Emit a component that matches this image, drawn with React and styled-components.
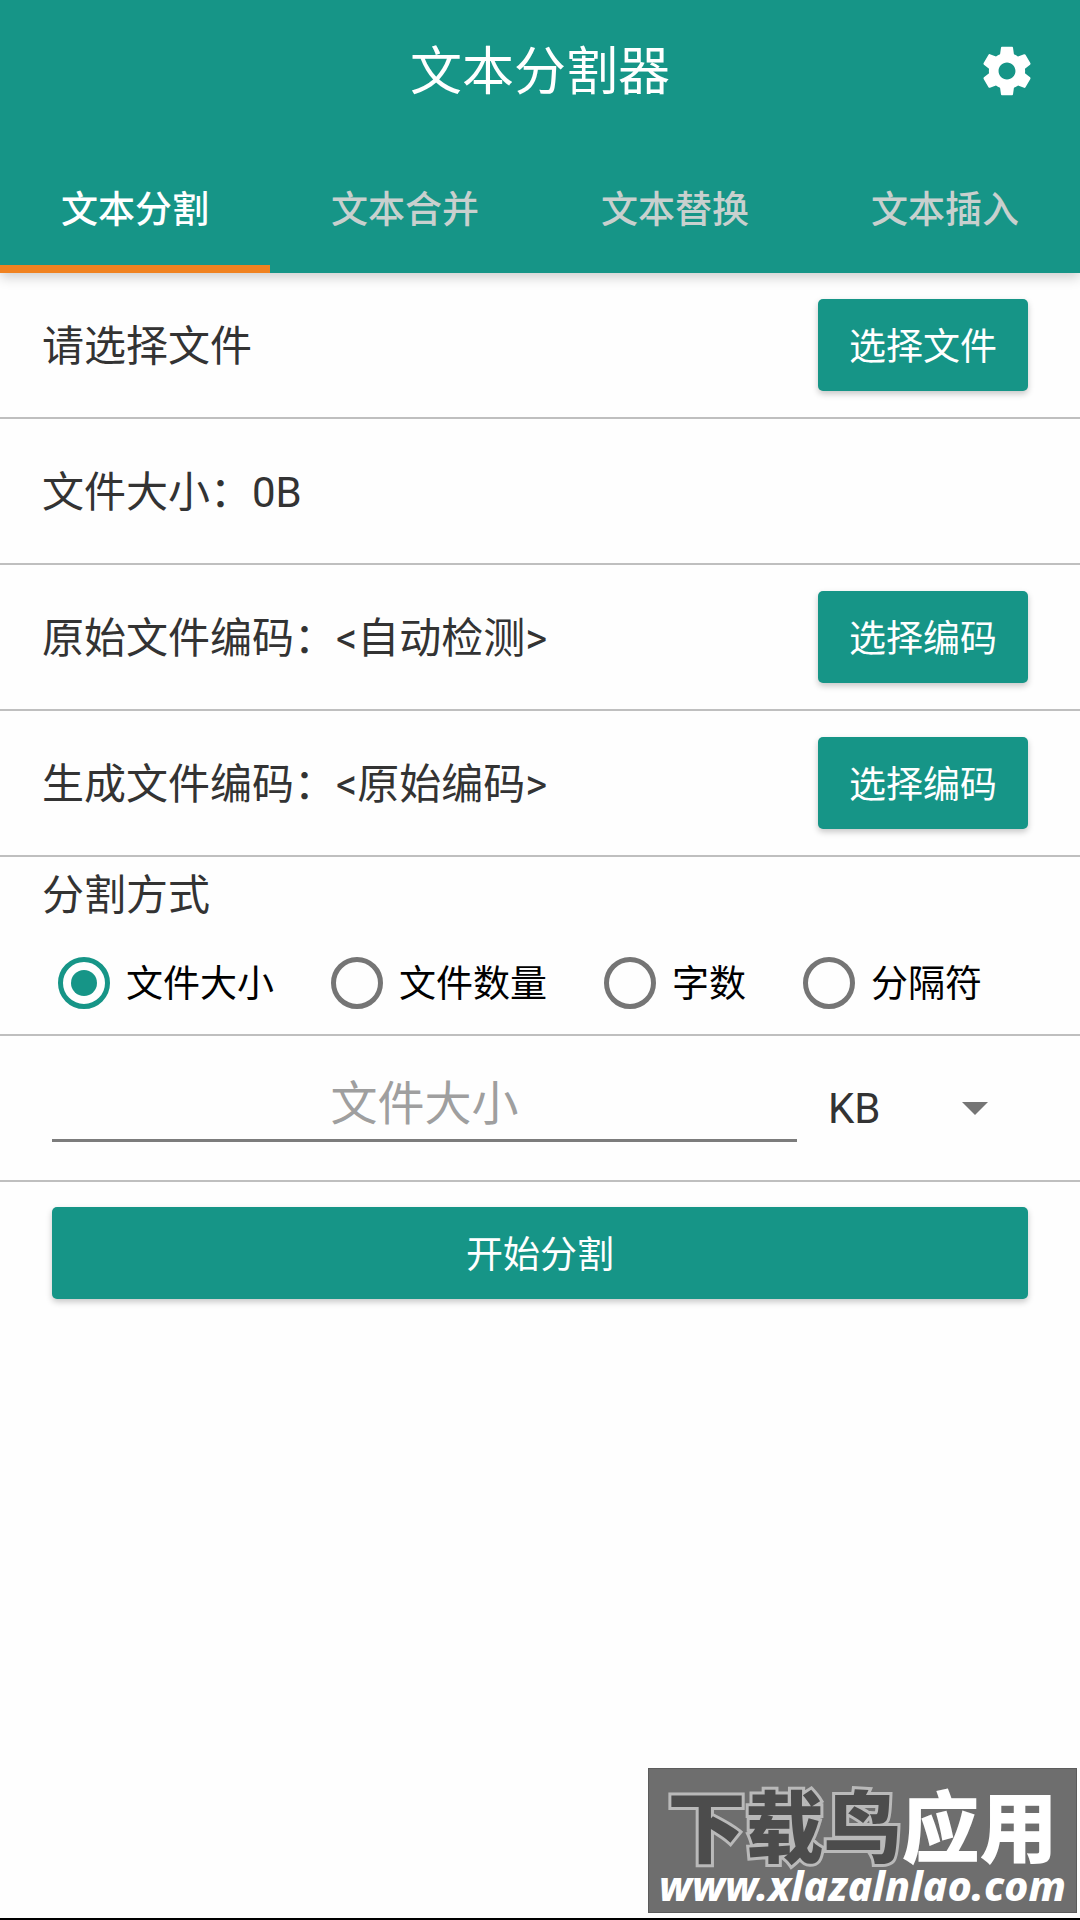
import React, { useState } from 'react'
import styled, { createGlobalStyle } from 'styled-components'

const GlobalStyle = createGlobalStyle`
  * {
    box-sizing: border-box;
  }
  body {
    margin: 0;
    background-color: #fefefe;
    font-family: Roboto, "Noto Sans CJK SC", sans-serif;
  }
  button, input, select {
    font-family: inherit;
  }
`

const Page = styled.div`
  position: relative;
  min-height: 100vh;
  border-bottom: 2px solid #000;
`

const Header = styled.header`
  background-color: #169587;
  box-shadow: 0 4px 12px rgba(0, 0, 0, 0.2);
`

const Toolbar = styled.div`
  display: grid;
  grid-template-columns: 1fr auto 1fr;
  align-items: center;
  height: 147px;
  padding: 0 44px 6px;
`

const Title = styled.h1`
  grid-column: 2;
  margin: 0;
  padding-top: 4px;
  color: #fff;
  font-size: 52px;
  font-weight: 400;
  line-height: 64px;
`

const SettingsButton = styled.button`
  display: flex;
  justify-self: end;
  padding: 0;
  border: none;
  background: none;
  color: #fff;
  cursor: pointer;
`

const Tabs = styled.nav`
  display: grid;
  grid-template-columns: repeat(4, 1fr);
`

const Tab = styled.button`
  height: 126px;
  padding: 2px 0 0;
  border: none;
  border-bottom: 8px solid ${(props) => (props.$active ? '#f08220' : 'transparent')};
  background: none;
  color: ${(props) => (props.$active ? '#fff' : '#c8d0ce')};
  font-size: 37px;
  font-weight: 500;
  cursor: pointer;
`

const Row = styled.div`
  display: flex;
  align-items: center;
  justify-content: space-between;
  min-height: 146px;
  padding: 0 52px 0 42px;
  border-bottom: 2px solid #bfbfbf;
`

const Label = styled.span`
  padding-top: 4px;
  color: #333;
  font-size: 42px;
  line-height: 60px;
`

const Button = styled.button`
  width: ${(props) => (props.$wide ? '100%' : '210px')};
  height: 92px;
  padding: 0 0 2px;
  border: none;
  border-radius: 5px;
  background-color: #169587;
  box-shadow: 0 3px 6px rgba(0, 0, 0, 0.22);
  color: #fff;
  font-size: 37px;
  cursor: pointer;
`

const Modes = styled.fieldset`
  margin: 0;
  padding: 9px 42px 24px;
  border: none;
  border-bottom: 2px solid #bfbfbf;
`

const Legend = styled.legend`
  float: left;
  width: 100%;
  padding: 0;
  color: #333;
  font-size: 42px;
  line-height: 60px;
`

const Options = styled.div`
  display: flex;
  clear: both;
  gap: 57px;
  padding: 30px 16px 0;
`

const Option = styled.label`
  display: flex;
  align-items: center;
  gap: 16px;
  color: #000;
  font-size: 37px;
  line-height: 50px;
  white-space: nowrap;
  cursor: pointer;
`

const OptionText = styled.span`
  padding-top: 4px;
`

const Radio = styled.input`
  display: grid;
  place-items: center;
  width: 52px;
  height: 52px;
  margin: 0;
  border: 5px solid #757575;
  border-radius: 50%;
  appearance: none;

  &:checked {
    border-color: #169587;
  }
  &:checked::before {
    content: '';
    width: 26px;
    height: 26px;
    border-radius: 50%;
    background-color: #169587;
  }
`

const AmountRow = styled(Row)`
  gap: 31px;
  padding: 0 52px;
`

const AmountInput = styled.input`
  flex: 1;
  min-width: 0;
  height: 68px;
  padding: 0 0 6px;
  border: none;
  border-bottom: 3px solid #7c7c7c;
  background: none;
  color: #333;
  font-size: 47px;
  text-align: center;
  outline: none;

  &::placeholder {
    color: #9f9f9f;
  }
`

const UnitBox = styled.div`
  display: grid;
  align-items: center;
  width: 200px;

  > * {
    grid-area: 1 / 1;
  }
`

const UnitSelect = styled.select`
  width: 100%;
  height: 66px;
  padding: 0;
  border: none;
  background: none;
  color: #333;
  font-size: 42px;
  appearance: none;
  outline: none;
`

const Caret = styled.svg`
  justify-self: end;
  margin-right: 40px;
  pointer-events: none;
`

const Submit = styled.div`
  padding: 25px 52px;
`

const Watermark = styled.a`
  position: absolute;
  right: 3px;
  bottom: 5px;
  display: flex;
  flex-direction: column;
  align-items: center;
  width: 429px;
  padding: 26px 0 7px;
  border: 1px solid #5c5c5c;
  background-color: #6e6e6e;
  color: #fff;
  text-decoration: none;
`

const Brand = styled.span`
  display: flex;
  font-family: "Liberation Sans", "Noto Sans CJK SC", sans-serif;
  font-size: 78px;
  font-weight: 900;
  line-height: 70px;
  white-space: nowrap;
`

const Outlined = styled.span`
  color: #4c4c4c;
  -webkit-text-stroke: 6px #b9b9b9;
  paint-order: stroke fill;
`

const Site = styled.span`
  font-family: "Noto Sans", sans-serif;
  font-size: 41px;
  font-style: italic;
  font-weight: 800;
  line-height: 40px;
`

const tabs = ['文本分割', '文本合并', '文本替换', '文本插入']
const modes = ['文件大小', '文件数量', '字数', '分隔符']

const App = () => {
  const [tab, setTab] = useState(tabs[0])
  const [mode, setMode] = useState(modes[0])

  return (
    <Page>
      <GlobalStyle />
      <Header>
        <Toolbar>
          <Title>文本分割器</Title>
          <SettingsButton aria-label="设置">
            <svg width="58" height="58" viewBox="0 0 24 24" fill="currentColor">
              <path d="M19.43 12.98c.04-.32.07-.64.07-.98s-.03-.66-.07-.98l2.11-1.65c.19-.15.24-.42.12-.64l-2-3.46c-.12-.22-.39-.3-.61-.22l-2.49 1c-.52-.4-1.08-.73-1.69-.98l-.38-2.65C14.46 2.18 14.25 2 14 2h-4c-.25 0-.46.18-.49.42l-.38 2.65c-.61.25-1.17.59-1.69.98l-2.49-1c-.23-.09-.49 0-.61.22l-2 3.46c-.13.22-.07.49.12.64l2.11 1.65c-.04.32-.07.65-.07.98s.03.66.07.98l-2.11 1.65c-.19.15-.24.42-.12.64l2 3.46c.12.22.39.3.61.22l2.49-1c.52.4 1.08.73 1.69.98l.38 2.65c.03.24.24.42.49.42h4c.25 0 .46-.18.49-.42l.38-2.65c.61-.25 1.17-.59 1.69-.98l2.49 1c.23.09.49 0 .61-.22l2-3.46c.12-.22.07-.49-.12-.64l-2.11-1.65zM12 15.5c-1.93 0-3.5-1.57-3.5-3.5s1.57-3.5 3.5-3.5 3.5 1.57 3.5 3.5-1.57 3.5-3.5 3.5z" />
            </svg>
          </SettingsButton>
        </Toolbar>
        <Tabs>
          {tabs.map((name) => (
            <Tab key={name} $active={name === tab} onClick={() => setTab(name)}>
              {name}
            </Tab>
          ))}
        </Tabs>
      </Header>

      <main>
        <Row>
          <Label>请选择文件</Label>
          <Button>选择文件</Button>
        </Row>
        <Row>
          <Label>文件大小：0B</Label>
        </Row>
        <Row>
          <Label>原始文件编码：&lt;自动检测&gt;</Label>
          <Button>选择编码</Button>
        </Row>
        <Row>
          <Label>生成文件编码：&lt;原始编码&gt;</Label>
          <Button>选择编码</Button>
        </Row>
        <Modes>
          <Legend>分割方式</Legend>
          <Options>
            {modes.map((name) => (
              <Option key={name}>
                <Radio
                  type="radio"
                  name="mode"
                  value={name}
                  checked={name === mode}
                  onChange={() => setMode(name)}
                />
                <OptionText>{name}</OptionText>
              </Option>
            ))}
          </Options>
        </Modes>
        <AmountRow>
          <AmountInput type="text" placeholder={mode} aria-label={mode} />
          <UnitBox>
            <UnitSelect aria-label="单位" defaultValue="KB">
              <option>B</option>
              <option>KB</option>
              <option>MB</option>
            </UnitSelect>
            <Caret width="26" height="13" viewBox="0 0 26 13" fill="#757575">
              <path d="M0 0h26L13 13z" />
            </Caret>
          </UnitBox>
        </AmountRow>
        <Submit>
          <Button $wide>开始分割</Button>
        </Submit>
      </main>

      <Watermark href="#">
        <Brand>
          <Outlined>下载鸟</Outlined>
          <span>应用</span>
        </Brand>
        <Site>www.xlazalnlao.com</Site>
      </Watermark>
    </Page>
  )
}

export default App
